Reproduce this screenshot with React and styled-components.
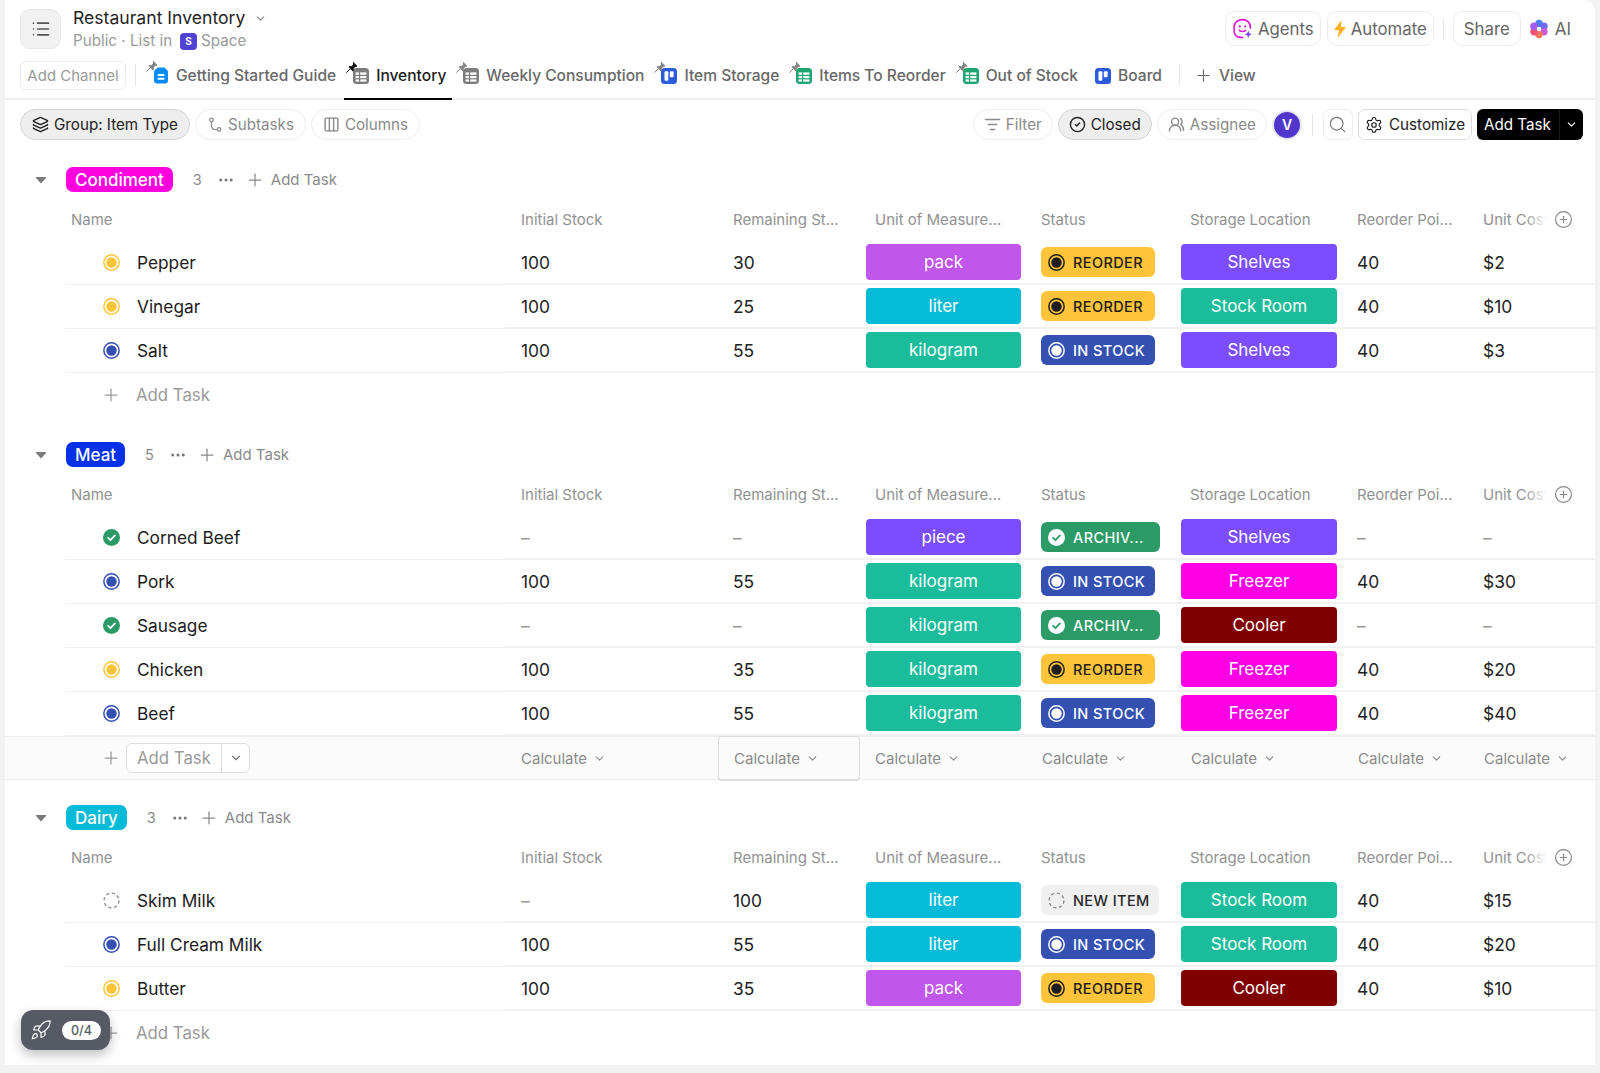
import styled, { createGlobalStyle } from "styled-components";
import {
  List,
  ChevronDown,
  Plus,
  Layers,
  Columns3,
  ListFilter,
  CircleCheck,
  UsersRound,
  Search,
  Settings,
  Rocket,
  Ellipsis,
  CirclePlus,
} from "lucide-react";

const GRID = "440px 213px 148px 175px 140px 176px 126px 1fr";

const COLORS = {
  pack: "#c056ec",
  liter: "#06bbd8",
  kilogram: "#1abc9c",
  piece: "#7c4dff",
  Shelves: "#7c4dff",
  "Stock Room": "#1abc9c",
  Freezer: "#ff00e6",
  Cooler: "#800000",
};

const GROUPS = [
  {
    name: "Condiment",
    color: "#ff00df",
    count: 3,
    tasks: [
      ["Pepper", "100", "30", "pack", "reorder", "Shelves", "40", "$2"],
      ["Vinegar", "100", "25", "liter", "reorder", "Stock Room", "40", "$10"],
      ["Salt", "100", "55", "kilogram", "stock", "Shelves", "40", "$3"],
    ],
  },
  {
    name: "Meat",
    color: "#0231e8",
    count: 5,
    calc: true,
    tasks: [
      ["Corned Beef", "–", "–", "piece", "archived", "Shelves", "–", "–"],
      ["Pork", "100", "55", "kilogram", "stock", "Freezer", "40", "$30"],
      ["Sausage", "–", "–", "kilogram", "archived", "Cooler", "–", "–"],
      ["Chicken", "100", "35", "kilogram", "reorder", "Freezer", "40", "$20"],
      ["Beef", "100", "55", "kilogram", "stock", "Freezer", "40", "$40"],
    ],
  },
  {
    name: "Dairy",
    color: "#06bbd8",
    count: 3,
    tasks: [
      ["Skim Milk", "–", "100", "liter", "new", "Stock Room", "40", "$15"],
      ["Full Cream Milk", "100", "55", "liter", "stock", "Stock Room", "40", "$20"],
      ["Butter", "100", "35", "pack", "reorder", "Cooler", "40", "$10"],
    ],
  },
];

const STATUS = {
  reorder: { label: "REORDER", bg: "#ffc43a", fg: "#1c1c1c", icon: "#ffc43a", w: 114 },
  stock: { label: "IN STOCK", bg: "#3451b2", fg: "#ffffff", icon: "#3451b2", w: 114 },
  archived: { label: "ARCHIV...", bg: "#2b9a66", fg: "#ffffff", icon: "#2b9a66", w: 119 },
  new: { label: "NEW ITEM", bg: "#f0f0f0", fg: "#2a2a2a", icon: "#8a8a8a", w: 118 },
};

const TABS = [
  { label: "Getting Started Guide", icon: "doc", pinned: true },
  { label: "Inventory", icon: "table", pinned: true, active: true },
  { label: "Weekly Consumption", icon: "table", pinned: true },
  { label: "Item Storage", icon: "board", pinned: true },
  { label: "Items To Reorder", icon: "greentable", pinned: true },
  { label: "Out of Stock", icon: "greentable", pinned: true },
  { label: "Board", icon: "board" },
];

const GlobalStyle = createGlobalStyle`
  html, body {
    margin: 0;
    padding: 0;
    background: #f2f2f2;
  }
  body {
    font-family: Inter, "Liberation Sans", sans-serif;
    color: #222;
    overflow: hidden;
  }
  * {
    box-sizing: border-box;
  }
`;

function StatusDot({ kind, size = 17, ring, check }) {
  const c = ring || STATUS[kind].icon;
  if (kind === "new") {
    return (
      <svg width={size} height={size} viewBox="0 0 16 16" fill="none">
        <circle cx="8" cy="8" r="7" stroke={c} strokeWidth="1.3" strokeDasharray="3 2.5" />
      </svg>
    );
  }
  if (kind === "archived") {
    return (
      <svg width={size} height={size} viewBox="0 0 16 16" fill="none">
        <circle cx="8" cy="8" r="8" fill={c} />
        <path d="M4.8 8.3l2.2 2.1 4.2-4.4" stroke={check || "#fff"} strokeWidth="1.7" strokeLinecap="round" strokeLinejoin="round" />
      </svg>
    );
  }
  return (
    <svg width={size} height={size} viewBox="0 0 16 16" fill="none">
      <circle cx="8" cy="8" r="7.2" stroke={c} strokeWidth="1.4" />
      <circle cx="8" cy="8" r="4.9" fill={c} />
    </svg>
  );
}

function TabIcon({ kind }) {
  if (kind === "doc") {
    return (
      <svg width="16" height="17" viewBox="0 0 16 17">
        <path d="M5.500.5h5c.7 0 1.300.3 1.800.8l2 2c.5.5.7 1.100.7 1.700V13.500a3 3 0 0 1-3 3H4a3 3 0 0 1-3-3V5c0-.7.3-1.300.8-1.800l2-2c.5-.5 1.100-.7 1.700-.7z" fill="#0b8cf5" />
        <rect x="4.500" y="7" width="7" height="2" rx="1" fill="#fff" />
        <rect x="4.500" y="10.800" width="7" height="2" rx="1" fill="#fff" />
      </svg>
    );
  }
  if (kind === "board") {
    return (
      <svg width="16" height="16" viewBox="0 0 16 16">
        <rect width="16" height="16" rx="3.500" fill="#2c5bdc" />
        <rect x="3.500" y="3.200" width="3.800" height="9.600" rx="1" fill="#fff" />
        <rect x="8.800" y="3.200" width="3.800" height="6" rx="1" fill="#fff" />
      </svg>
    );
  }
  const c = kind === "table" ? "#7d7d7d" : "#1ea672";
  return (
    <svg width="16" height="16" viewBox="0 0 16 16">
      <rect width="16" height="16" rx="3.500" fill={c} />
      <rect x="2.600" y="4.400" width="3.400" height="2.400" fill="#fff" />
      <rect x="7.200" y="4.400" width="6.200" height="2.400" fill="#fff" />
      <rect x="2.600" y="8" width="3.400" height="2.200" fill="#fff" />
      <rect x="7.200" y="8" width="6.200" height="2.200" fill="#fff" />
      <rect x="2.600" y="11.400" width="3.400" height="2.200" fill="#fff" />
      <rect x="7.200" y="11.400" width="6.200" height="2.200" fill="#fff" />
    </svg>
  );
}

function PinIcon({ dark }) {
  const c = dark ? "#111" : "#858585";
  return (
    <svg width="12" height="12" viewBox="0 0 12 12">
      <path d="M7 .6l4.400 4.400-1.200 1-.8-.2-1.700 1.700.2 1.900-1 1-4.400-4.400 1-1 1.900.2 1.700-1.700-.2-.8z" fill={c} />
      <path d="M3.800 8.200L.6 11.400" stroke={c} strokeWidth="1" strokeLinecap="round" />
    </svg>
  );
}

function SubtaskIcon() {
  return (
    <svg width="16" height="16" viewBox="0 0 16 16" fill="none" stroke="#888" strokeWidth="1.200">
      <circle cx="4.500" cy="3" r="1.800" />
      <circle cx="12" cy="12.500" r="1.800" />
      <path d="M4.500 4.800V9a3.500 3.500 0 0 0 3.500 3.500h2.200" />
    </svg>
  );
}

function AgentIcon() {
  return (
    <svg width="21" height="21" viewBox="0 0 20 20" fill="none">
      <path
        d="M10 1.500c4.200 0 7.500 3 7.500 7v1M10 18.500H8c-3.500 0-6-2.700-6-6.500V8.500c0-4 3.500-7 8-7"
        stroke="#e516d8"
        strokeWidth="1.600"
        strokeLinecap="round"
      />
      <circle cx="7.500" cy="8" r="1" fill="#e516d8" />
      <circle cx="12.500" cy="8" r="1" fill="#e516d8" />
      <path d="M7 11.800c1.500 1.400 4.500 1.400 6 0" stroke="#e516d8" strokeWidth="1.400" strokeLinecap="round" />
      <path d="M15.500 12l1 2.500 2.500 1-2.500 1-1 2.500-1-2.500-2.500-1 2.500-1z" fill="#7b3ff2" />
    </svg>
  );
}

function BoltIcon() {
  return (
    <svg width="12" height="18" viewBox="0 0 12 18">
      <path d="M7.500 0L0 10h4.800L3.800 18 12 7H7z" fill="#ffb020" />
    </svg>
  );
}

function AiIcon() {
  return (
    <svg width="20" height="20" viewBox="0 0 20 20">
      <circle cx="10" cy="4.400" r="3.700" fill="#4f7df5" />
      <circle cx="15" cy="7.300" r="3.700" fill="#6f6cf2" />
      <circle cx="15" cy="12.800" r="3.700" fill="#c85fd8" />
      <circle cx="10" cy="15.600" r="3.700" fill="#f3745c" />
      <circle cx="5" cy="12.800" r="3.700" fill="#f0527a" />
      <circle cx="5" cy="7.300" r="3.700" fill="#a45cf0" />
      <circle cx="10" cy="10" r="2.200" fill="#fff" />
    </svg>
  );
}

function Caret() {
  return (
    <svg width="12" height="8" viewBox="0 0 12 8">
      <path d="M1.500 1h9c.6 0 .9.6.5 1.100L6.500 7c-.3.300-.7.300-1 0L1 2.100C.6 1.600.9 1 1.500 1z" fill="#7b7b7b" />
    </svg>
  );
}

const Page = styled.div`
  width: 1600px;
  height: 1073px;
  padding: 0 5px 8px;
  position: relative;
`;

const Card = styled.div`
  background: #fff;
  height: 1065px;
  border-top-right-radius: 12px;
  overflow: hidden;
`;

const TopRow = styled.div`
  height: 57px;
  padding: 9px 7px 0 15px;
  display: flex;
  align-items: flex-start;
`;

const ListBadge = styled.div`
  width: 41px;
  height: 40px;
  border-radius: 10px;
  background: #f1f1f1;
  border: 1px solid #e8e8e8;
  color: #555;
  display: flex;
  align-items: center;
  justify-content: center;
`;

const TitleBlock = styled.div`
  margin-left: 12px;
  margin-top: -1px;
  display: flex;
  flex-direction: column;
  gap: 4px;
`;

const TitleLine = styled.div`
  display: flex;
  align-items: center;
  gap: 9px;
  font-size: 17.6px;
  line-height: 20px;
  color: #1f1f1f;
  svg {
    color: #888;
  }
`;

const Crumbs = styled.div`
  display: flex;
  align-items: center;
  gap: 5px;
  font-size: 15.2px;
  line-height: 18px;
  color: #9a9a9a;
`;

const SpaceBadge = styled.span`
  width: 17px;
  height: 17px;
  margin: 0 -1px 0 3px;
  border-radius: 4px;
  background: #5142d6;
  color: #fff;
  font-size: 10px;
  font-weight: 700;
  display: flex;
  align-items: center;
  justify-content: center;
`;

const TopActions = styled.div`
  margin-left: auto;
  margin-top: 2px;
  display: flex;
  align-items: center;
  gap: 6px;
`;

const TopButton = styled.div`
  height: 35px;
  padding: 0 ${(p) => p.$pad || 6}px;
  border: 1px solid #ececec;
  border-radius: 10px;
  display: flex;
  align-items: center;
  gap: 5px;
  font-size: 16.8px;
  color: #666;
`;

const AiLabel = styled.div`
  display: flex;
  align-items: center;
  gap: 6px;
  margin-left: 2px;
  padding-right: 17px;
  font-size: 17px;
  color: #666;
`;

const VDivider = styled.div`
  width: 1px;
  height: ${(p) => p.$h || 22}px;
  background: #e6e6e6;
  margin: ${(p) => p.$m || "0 2px"};
`;

const TabRow = styled.div`
  height: 43px;
  padding: 0 0 0 15px;
  display: flex;
  align-items: stretch;
  border-bottom: 2px solid #eeeeee;
`;

const ChannelButton = styled.div`
  align-self: flex-start;
  margin-top: 4px;
  width: 106px;
  height: 29px;
  border: 1px solid #ececec;
  border-radius: 6px;
  font-size: 15px;
  color: #9a9a9a;
  display: flex;
  align-items: center;
  justify-content: center;
`;

const TabList = styled.div`
  display: flex;
  gap: 2px;
`;

const Tab = styled.div`
  position: relative;
  height: 43px;
  padding: 0 6px 4px 9px;
  display: flex;
  align-items: center;
  gap: 7px;
  font-size: 15.55px;
  font-weight: 500;
  color: ${(p) => (p.$active ? "#1c1c1c" : "#686868")};
  border-bottom: 2px solid ${(p) => (p.$active ? "#000" : "transparent")};
`;

const TabGlyph = styled.span`
  position: relative;
  display: flex;
`;

const PinMark = styled.span`
  position: absolute;
  left: -7px;
  top: -7px;
  display: flex;
`;

const ViewTab = styled.div`
  display: flex;
  align-items: center;
  gap: 6px;
  padding-bottom: 4px;
  font-size: 15.55px;
  font-weight: 500;
  color: #686868;
`;

const Toolbar = styled.div`
  height: 67px;
  padding: 9px 12px 0 15px;
  display: flex;
  align-items: flex-start;
  justify-content: space-between;
`;

const ToolGroup = styled.div`
  display: flex;
  align-items: center;
  gap: 5px;
`;

const ToolPill = styled.div`
  height: 31px;
  padding: 0 ${(p) => (p.$tight ? 10 : 11)}px;
  border-radius: 16px;
  border: 1px solid ${(p) => (p.$on ? "#d2d2d2" : "#ededed")};
  background: ${(p) => (p.$on ? "#eeeeee" : "#fff")};
  color: ${(p) => (p.$on ? "#222" : "#8a8a8a")};
  display: flex;
  align-items: center;
  gap: 5px;
  font-size: 15.2px;
`;

const Avatar = styled.div`
  width: 30px;
  height: 30px;
  border-radius: 50%;
  border: 2px solid #e6e6f5;
  background: #5035cc;
  color: #fff;
  font-size: 14px;
  font-weight: 600;
  display: flex;
  align-items: center;
  justify-content: center;
`;

const SquareButton = styled.div`
  height: 31px;
  min-width: 30px;
  padding: ${(p) => (p.$wide ? "0 6px" : "0")};
  border-radius: 7px;
  border: 1px solid ${(p) => (p.$wide ? "#dcdcdc" : "#ededed")};
  color: #222;
  display: flex;
  align-items: center;
  justify-content: center;
  gap: 6px;
  font-size: 15.2px;
`;

const AddTaskSplit = styled.div`
  height: 31px;
  width: 106px;
  border-radius: 6px;
  background: #000;
  color: #fff;
  display: flex;
  align-items: center;
  font-size: 15.2px;
`;

const AddTaskMain = styled.span`
  width: 82px;
  padding-left: 7px;
`;

const AddTaskChevron = styled.span`
  flex: 1;
  height: 100%;
  border-left: 1px solid #1c1c1c;
  display: flex;
  align-items: center;
  justify-content: center;
`;

const GroupList = styled.div`
  display: flex;
  flex-direction: column;
  gap: 25px;
`;

const GroupHead = styled.div`
  height: 25px;
  padding-left: 30px;
  display: flex;
  align-items: center;
  color: #8a8a8a;
`;

const CaretSlot = styled.span`
  width: 31px;
  display: flex;
`;

const GroupPill = styled.span`
  height: 25px;
  padding: 0 9px;
  border-radius: 7px;
  background: ${(p) => p.$color};
  color: #fff;
  font-size: 17px;
  font-weight: 500;
  display: flex;
  align-items: center;
`;

const GroupCount = styled.span`
  margin-left: 20px;
  font-size: 14.5px;
`;

const GroupDots = styled.span`
  margin-left: 15px;
  display: flex;
  color: #777;
`;

const GroupAdd = styled.span`
  margin-left: 10px;
  display: flex;
  align-items: center;
  gap: 6px;
  font-size: 15px;
`;

const Table = styled.div`
  padding-left: 60px;
`;

const HeadRow = styled.div`
  height: 49px;
  padding: 8px 0 2px;
  display: grid;
  grid-template-columns: ${GRID};
`;

const HeadCell = styled.div`
  position: relative;
  display: flex;
  align-items: center;
  padding-left: ${(p) => p.$pad || 0}px;
  font-size: 15px;
  color: #929292;
  white-space: nowrap;
  overflow: hidden;
`;

const AddColumn = styled.span`
  position: absolute;
  right: 0;
  top: 0;
  bottom: 0;
  width: 70px;
  padding-right: 22px;
  display: flex;
  align-items: center;
  justify-content: flex-end;
  color: #888;
  background: linear-gradient(to right, rgba(255, 255, 255, 0), #fff 22px);
`;

const Row = styled.div`
  height: 44px;
  display: grid;
  grid-template-columns: ${GRID};
`;

const NameCell = styled.div`
  display: flex;
  align-items: center;
  gap: 17px;
  padding-left: 38px;
  border-bottom: 1px solid #f0f0f0;
  font-size: 17.3px;
  color: #1a1a1a;
`;

const Cell = styled.div`
  display: flex;
  align-items: center;
  padding-left: ${(p) => p.$pad || 0}px;
  border-bottom: 2px solid #f1f1f1;
  font-size: 17.4px;
  color: ${(p) => (p.$muted ? "#999" : "#222")};
`;

const ColorTag = styled.div`
  width: ${(p) => p.$w}px;
  height: 36px;
  border-radius: 4px;
  background: ${(p) => p.$color};
  color: #fff;
  font-size: 17px;
  display: flex;
  align-items: center;
  justify-content: center;
`;

const StatusPill = styled.div`
  width: ${(p) => p.$w}px;
  height: 30px;
  padding: 0 0 0 7px;
  border-radius: 6px;
  background: ${(p) => p.$bg};
  color: ${(p) => p.$fg};
  display: flex;
  align-items: center;
  gap: 8px;
  font-size: 14.5px;
  font-weight: 500;
  letter-spacing: 0.4px;
`;

const AddRow = styled.div`
  height: 44px;
  padding-left: 36px;
  display: flex;
  align-items: center;
  gap: 15px;
  font-size: 16.8px;
  color: #9a9a9a;
`;

const CalcRow = styled.div`
  height: 44px;
  padding-left: 60px;
  display: grid;
  grid-template-columns: ${GRID};
  background: #fbfbfb;
  border-top: 1px solid #eeeeee;
  border-bottom: 1px solid #eeeeee;
`;

const CalcAdd = styled.div`
  display: flex;
  align-items: center;
  gap: 5px;
  padding-left: 36px;
  color: #999;
`;

const AddInput = styled.div`
  width: 124px;
  height: 30px;
  background: #fff;
  border: 1px solid #dedede;
  border-radius: 6px;
  display: flex;
  align-items: center;
  font-size: 16.8px;
  color: #9a9a9a;
`;

const AddInputText = styled.span`
  width: 94px;
  padding-left: 10px;
`;

const AddInputChevron = styled.span`
  flex: 1;
  height: 100%;
  border-left: 1px solid #dedede;
  display: flex;
  align-items: center;
  justify-content: center;
  color: #777;
`;

const Calc = styled.div`
  display: flex;
  align-items: center;
  gap: 6px;
  padding-left: ${(p) => p.$pad || 0}px;
  font-size: 15px;
  color: #8a8a8a;
  ${(p) =>
    p.$box &&
    `
    width: 142px;
    height: 45px;
    margin: -1px 0 -2px;
    border: 1px solid #dcdcdc;
    border-bottom-width: 2px;
    border-radius: 4px;
  `}
`;

const RocketWidget = styled.div`
  position: absolute;
  left: 21px;
  top: 1010px;
  width: 89px;
  height: 40px;
  border-radius: 12px;
  background: #555a65;
  box-shadow: 0 5px 12px rgba(0, 0, 0, 0.25);
  display: flex;
  align-items: center;
  padding-left: 9px;
  gap: 10px;
  color: #fff;
`;

const Progress = styled.span`
  width: 39px;
  height: 19px;
  border-radius: 10px;
  background: #fff;
  color: #555a65;
  font-size: 12.5px;
  font-weight: 500;
  display: flex;
  align-items: center;
  justify-content: center;
`;

const HEAD = [
  ["Name", 6],
  ["Initial Stock", 16],
  ["Remaining St...", 15],
  ["Unit of Measure...", 9],
  ["Status", 0],
  ["Storage Location", 9],
  ["Reorder Poi...", 0],
  ["Unit Cost", 0],
];

const CALC_PADS = [16, 15, 9, 1, 10, 1, 1];

function TaskRow({ task }) {
  const [name, initial, remaining, unit, status, storage, reorder, cost] = task;
  const st = STATUS[status];
  return (
    <Row>
      <NameCell>
        <StatusDot kind={status} />
        {name}
      </NameCell>
      <Cell $pad={16} $muted={initial === "–"}>{initial}</Cell>
      <Cell $pad={15} $muted={remaining === "–"}>{remaining}</Cell>
      <Cell>
        <ColorTag $w={155} $color={COLORS[unit]}>{unit}</ColorTag>
      </Cell>
      <Cell>
        <StatusPill $w={st.w} $bg={st.bg} $fg={st.fg}>
          <StatusDot
            kind={status}
            ring={status === "new" ? "#8a8a8a" : st.fg}
            check={st.bg}
          />
          {st.label}
        </StatusPill>
      </Cell>
      <Cell>
        <ColorTag $w={156} $color={COLORS[storage]}>{storage}</ColorTag>
      </Cell>
      <Cell $muted={reorder === "–"}>{reorder}</Cell>
      <Cell $muted={cost === "–"}>{cost}</Cell>
    </Row>
  );
}

function Group({ group }) {
  return (
    <section>
      <GroupHead>
        <CaretSlot>
          <Caret />
        </CaretSlot>
        <GroupPill $color={group.color}>{group.name}</GroupPill>
        <GroupCount>{group.count}</GroupCount>
        <GroupDots>
          <Ellipsis size={18} />
        </GroupDots>
        <GroupAdd>
          <Plus size={20} strokeWidth={1.5} />
          Add Task
        </GroupAdd>
      </GroupHead>
      <Table>
        <HeadRow>
          {HEAD.map(([label, pad], i) => (
            <HeadCell key={label} $pad={pad}>
              {label}
              {i === HEAD.length - 1 && (
                <AddColumn>
                  <CirclePlus size={19} strokeWidth={1.5} />
                </AddColumn>
              )}
            </HeadCell>
          ))}
        </HeadRow>
        {group.tasks.map((t) => (
          <TaskRow key={t[0]} task={t} />
        ))}
        {!group.calc && (
          <AddRow>
            <Plus size={20} strokeWidth={1.5} />
            Add Task
          </AddRow>
        )}
      </Table>
      {group.calc && (
        <CalcRow>
          <CalcAdd>
            <Plus size={20} strokeWidth={1.5} />
            <AddInput>
              <AddInputText>Add Task</AddInputText>
              <AddInputChevron>
                <ChevronDown size={14} />
              </AddInputChevron>
            </AddInput>
          </CalcAdd>
          {CALC_PADS.map((pad, i) => (
            <Calc key={i} $pad={pad} $box={i === 1}>
              Calculate
              <ChevronDown size={13} />
            </Calc>
          ))}
        </CalcRow>
      )}
    </section>
  );
}

export default function App() {
  return (
    <Page>
      <GlobalStyle />
      <Card>
        <TopRow>
          <ListBadge>
            <List size={20} />
          </ListBadge>
          <TitleBlock>
            <TitleLine>
              Restaurant Inventory
              <ChevronDown size={13} />
            </TitleLine>
            <Crumbs>
              Public · List in
              <SpaceBadge>S</SpaceBadge>
              Space
            </Crumbs>
          </TitleBlock>
          <TopActions>
            <TopButton>
              <AgentIcon />
              Agents
            </TopButton>
            <TopButton>
              <BoltIcon />
              Automate
            </TopButton>
            <VDivider $m="0 3px" />
            <TopButton $pad={10}>Share</TopButton>
            <AiLabel>
              <AiIcon />
              AI
            </AiLabel>
          </TopActions>
        </TopRow>

        <TabRow>
          <ChannelButton>Add Channel</ChannelButton>
          <VDivider $h={22} $m="7px 8px 0 9px" />
          <TabList>
            {TABS.map((tab) => (
              <Tab key={tab.label} $active={tab.active}>
                <TabGlyph>
                  {tab.pinned && (
                    <PinMark>
                      <PinIcon dark={tab.active} />
                    </PinMark>
                  )}
                  <TabIcon kind={tab.icon} />
                </TabGlyph>
                {tab.label}
              </Tab>
            ))}
          </TabList>
          <VDivider $h={22} $m="7px 14px 0 11px" />
          <ViewTab>
            <Plus size={19} strokeWidth={1.5} />
            View
          </ViewTab>
        </TabRow>

        <Toolbar>
          <ToolGroup>
            <ToolPill $on>
              <Layers size={17} />
              Group: Item Type
            </ToolPill>
            <ToolPill>
              <SubtaskIcon />
              Subtasks
            </ToolPill>
            <ToolPill>
              <Columns3 size={17} />
              Columns
            </ToolPill>
          </ToolGroup>
          <ToolGroup>
            <ToolPill $tight>
              <ListFilter size={17} />
              Filter
            </ToolPill>
            <ToolPill $tight $on>
              <CircleCheck size={17} />
              Closed
            </ToolPill>
            <ToolPill $tight>
              <UsersRound size={17} />
              Assignee
            </ToolPill>
            <Avatar>V</Avatar>
            <VDivider $h={22} $m="0 5px" />
            <SquareButton>
              <Search size={19} color="#777" strokeWidth={1.5} />
            </SquareButton>
            <SquareButton $wide>
              <Settings size={18} strokeWidth={1.6} />
              Customize
            </SquareButton>
            <AddTaskSplit>
              <AddTaskMain>Add Task</AddTaskMain>
              <AddTaskChevron>
                <ChevronDown size={13} />
              </AddTaskChevron>
            </AddTaskSplit>
          </ToolGroup>
        </Toolbar>

        <GroupList>
          {GROUPS.map((g) => (
            <Group key={g.name} group={g} />
          ))}
        </GroupList>
      </Card>

      <RocketWidget>
        <Rocket size={22} strokeWidth={1.3} />
        <Progress>0/4</Progress>
      </RocketWidget>
    </Page>
  );
}
